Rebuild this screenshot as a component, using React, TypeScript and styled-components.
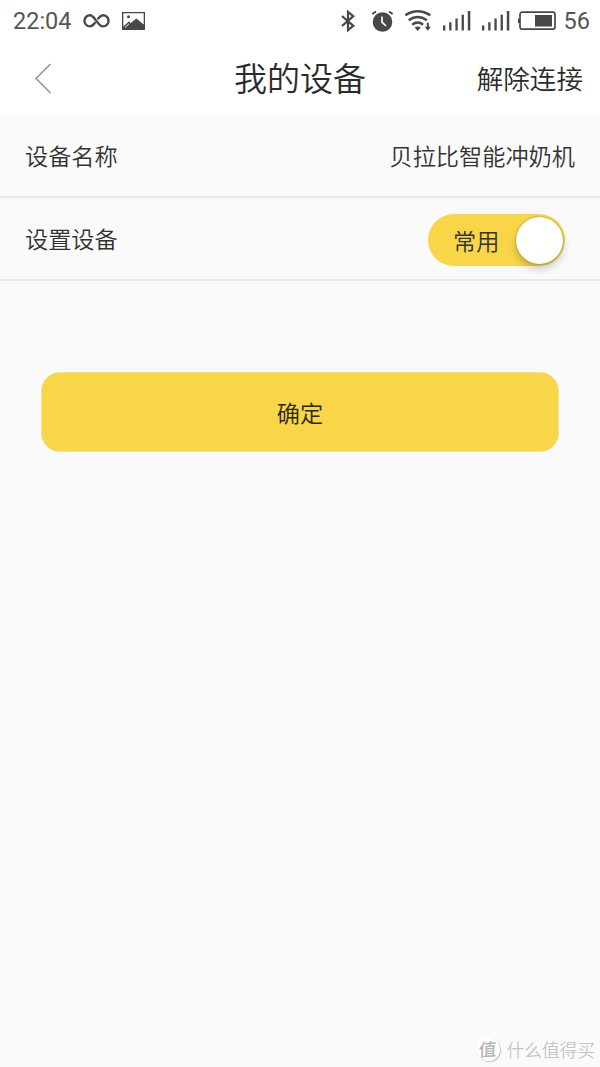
import React from 'react';
import styled, { createGlobalStyle } from 'styled-components';

const GlobalStyle = createGlobalStyle`
  * { box-sizing: border-box; }
  body {
    margin: 0;
    background: #fafafa;
    font-family: 'Noto Sans CJK SC', sans-serif;
    color: #333;
  }
`;

const Screen = styled.div`
  display: flex;
  flex-direction: column;
  width: 600px;
  height: 1067px;
  background: #fafafa;
  overflow: hidden;
`;

const StatusBar = styled.header`
  display: flex;
  justify-content: space-between;
  height: 42px;
  padding: 0 10px 0 13px;
  background: #fff;
`;

const StatusGroup = styled.div<{ $gap: number }>`
  display: flex;
  align-items: center;
  gap: ${(p) => p.$gap}px;
`;

const StatusText = styled.span`
  font: 400 23.5px/42px Roboto, sans-serif;
  color: #555;
`;

const Icon = styled.svg`
  display: block;
  flex: none;
  overflow: visible;
`;

const PictureIcon = styled(Icon)`
  margin-left: 1px;
`;

const BluetoothIcon = styled(Icon)`
  margin-right: 6px;
`;

const BatteryIcon = styled(Icon)`
  margin: 0 -3px;
`;

const NavBar = styled.nav`
  display: grid;
  grid-template-columns: 1fr auto 1fr;
  align-items: center;
  height: 73px;
  padding: 0 17px;
  background: #fff;
  color: #2b2b2b;
`;

const BackButton = styled.button`
  justify-self: start;
  margin-left: 17px;
  padding: 0;
  border: 0;
  background: none;
`;

const Title = styled.h1`
  margin: 0;
  padding-bottom: 2px;
  font-size: 33px;
  line-height: 71px;
  font-weight: 350;
`;

const NavAction = styled.span`
  justify-self: end;
  padding-bottom: 1px;
  font-size: 26.6px;
  font-weight: 350;
  line-height: 72px;
`;

const Row = styled.div<{ $end: number }>`
  display: flex;
  align-items: center;
  justify-content: space-between;
  height: 83px;
  padding: 0 ${(p) => p.$end}px 0 25px;
  border-bottom: 2px solid #e9e9e9;
  font-size: 23.2px;
  font-weight: 350;
`;

const RowText = styled.span`
  padding-bottom: 2px;
`;

const Toggle = styled.div`
  display: flex;
  align-items: center;
  justify-content: space-between;
  width: 137px;
  height: 52px;
  margin-top: 3px;
  padding: 0 2px 0 25px;
  border-radius: 26px;
  background: #f9d648;
`;

const Knob = styled.span`
  width: 47px;
  height: 47px;
  border-radius: 50%;
  background: #fff;
  box-shadow: 0 0 2px rgba(90, 70, 0, 0.55), 0 5px 8px rgba(0, 0, 0, 0.2);
`;

const ConfirmButton = styled.button`
  width: 518px;
  height: 80px;
  margin: 91px 0 0 41px;
  padding: 0 0 1px;
  border: 1px solid #f6e08a;
  border-radius: 19px;
  background: #f9d648;
  font: 350 23.2px 'Noto Sans CJK SC', sans-serif;
  color: #2c2608;
`;

const Watermark = styled.footer`
  display: flex;
  align-items: center;
  align-self: flex-end;
  gap: 7px;
  margin: auto 5px 5px 0;
  font-size: 17.7px;
  line-height: 26px;
  font-weight: 350;
  color: #c4c4c4;
  text-shadow: -1px -1px 0 #fff;
`;

const WatermarkBadge = styled.span`
  display: flex;
  align-items: center;
  justify-content: center;
  width: 23px;
  height: 23px;
  border-radius: 50%;
  background: #fff;
  box-shadow: 1px 1px 1px #c4c4c4;
  font-size: 17.5px;
  font-weight: 500;
  color: #b4b4b4;
`;

const BadgeGlyph = styled.span`
  transform: skewX(-7deg) rotate(-4deg);
`;

const INK = '#484848';

const Signal = () => (
  <Icon width="28" height="22" viewBox="0 0 28 22" fill={INK}>
    <rect x="0" y="15.5" width="2.3" height="5" />
    <rect x="6.2" y="12.2" width="2.3" height="8.3" />
    <rect x="12.4" y="8.5" width="2.3" height="12" />
    <rect x="18.6" y="4.7" width="2.3" height="15.8" />
    <rect x="24.8" y="1" width="2.5" height="19.5" />
  </Icon>
);

export default function App() {
  return (
    <>
      <GlobalStyle />
      <Screen>
        <StatusBar>
          <StatusGroup $gap={11}>
            <StatusText>22:04</StatusText>
            <Icon width="27" height="16" viewBox="0 0 27 16" fill="none" stroke={INK} strokeWidth="2.4" strokeLinecap="round">
              <path d="M11.8 10C10.4 11.8 9 13.4 7 13.4A5.6 5.6 0 0 1 7 2.2C12 2.2 14.5 13.4 20 13.4A5.6 5.6 0 0 0 20 2.2C18 2.2 16.6 3.6 15.2 5.4" />
            </Icon>
            <PictureIcon width="23" height="18" viewBox="0 0 23 18">
              <path fill={INK} fillRule="evenodd" d="M0 0H23V18H0ZM1.3 1.3V14.5L3 13 6.5 9.8Q8.5 9 8 11.5L14.4 6.6 21.7 12.5V1.3Z" />
              <circle cx="6.5" cy="4.8" r="1.5" fill={INK} />
              <path d="M3 15.5 7 11.8" stroke="#fff" strokeWidth="1" />
            </PictureIcon>
          </StatusGroup>
          <StatusGroup $gap={11}>
            <BluetoothIcon width="14" height="22" viewBox="0 0 14 22" fill="none" stroke={INK} strokeWidth="2.2">
              <path d="M1 6 12.3 15.8 7 20.2V1.8L12.3 6.2 1 16" />
            </BluetoothIcon>
            <Icon width="22" height="22" viewBox="0 0 22 22" fill="none" stroke={INK}>
              <circle cx="10.5" cy="12" r="9.8" fill={INK} stroke="none" />
              <path d="M.5 4.3Q1.7 2.4 4.1 1.6M16.9 1.6Q19.3 2.4 20.5 4.3" strokeWidth="2" />
              <path d="M10 6.5V12.2L14 16" stroke="#fff" strokeWidth="1.7" />
            </Icon>
            <Icon width="27" height="22" viewBox="0 0 27 22" fill="none" stroke={INK} strokeWidth="2.4">
              <path d="M.3 5.2Q12.7-2.8 25.3 5.2M3.7 10.2Q12.7 3.8 21.9 10.2M7.2 14.7Q12.7 10.5 18.1 14.7" />
              <path d="M9.7 17.5Q12.7 15.6 15.7 17.5L12.7 21Z" fill={INK} stroke="none" />
              <path d="M22.8 12.7V18" strokeWidth="2" />
              <path d="M19.7 16.8H25.9L22.8 20.7Z" fill={INK} stroke="none" />
            </Icon>
            <Signal />
            <Signal />
            <BatteryIcon width="38" height="20" viewBox="0 0 38 20">
              <rect x="2" y="1.2" width="35" height="17" rx="2.2" fill="none" stroke={INK} strokeWidth="1.7" />
              <rect x="0" y="7.5" width="1.7" height="4.5" fill={INK} />
              <rect x="17" y="4" width="17" height="11.5" fill={INK} />
            </BatteryIcon>
            <StatusText>56</StatusText>
          </StatusGroup>
        </StatusBar>
        <NavBar>
          <BackButton aria-label="返回">
            <Icon width="18" height="32" viewBox="0 0 18 32" fill="none" stroke="#9a9a9a" strokeWidth="1.7">
              <path d="M16.5 1 2 15.5 16.5 30" />
            </Icon>
          </BackButton>
          <Title>我的设备</Title>
          <NavAction>解除连接</NavAction>
        </NavBar>
        <Row $end={25}>
          <RowText>设备名称</RowText>
          <RowText>贝拉比智能冲奶机</RowText>
        </Row>
        <Row $end={35}>
          <RowText>设置设备</RowText>
          <Toggle role="switch" aria-checked="true">
            <span>常用</span>
            <Knob />
          </Toggle>
        </Row>
        <ConfirmButton>确定</ConfirmButton>
        <Watermark>
          <WatermarkBadge>
            <BadgeGlyph>值</BadgeGlyph>
          </WatermarkBadge>
          <span>什么值得买</span>
        </Watermark>
      </Screen>
    </>
  );
}
